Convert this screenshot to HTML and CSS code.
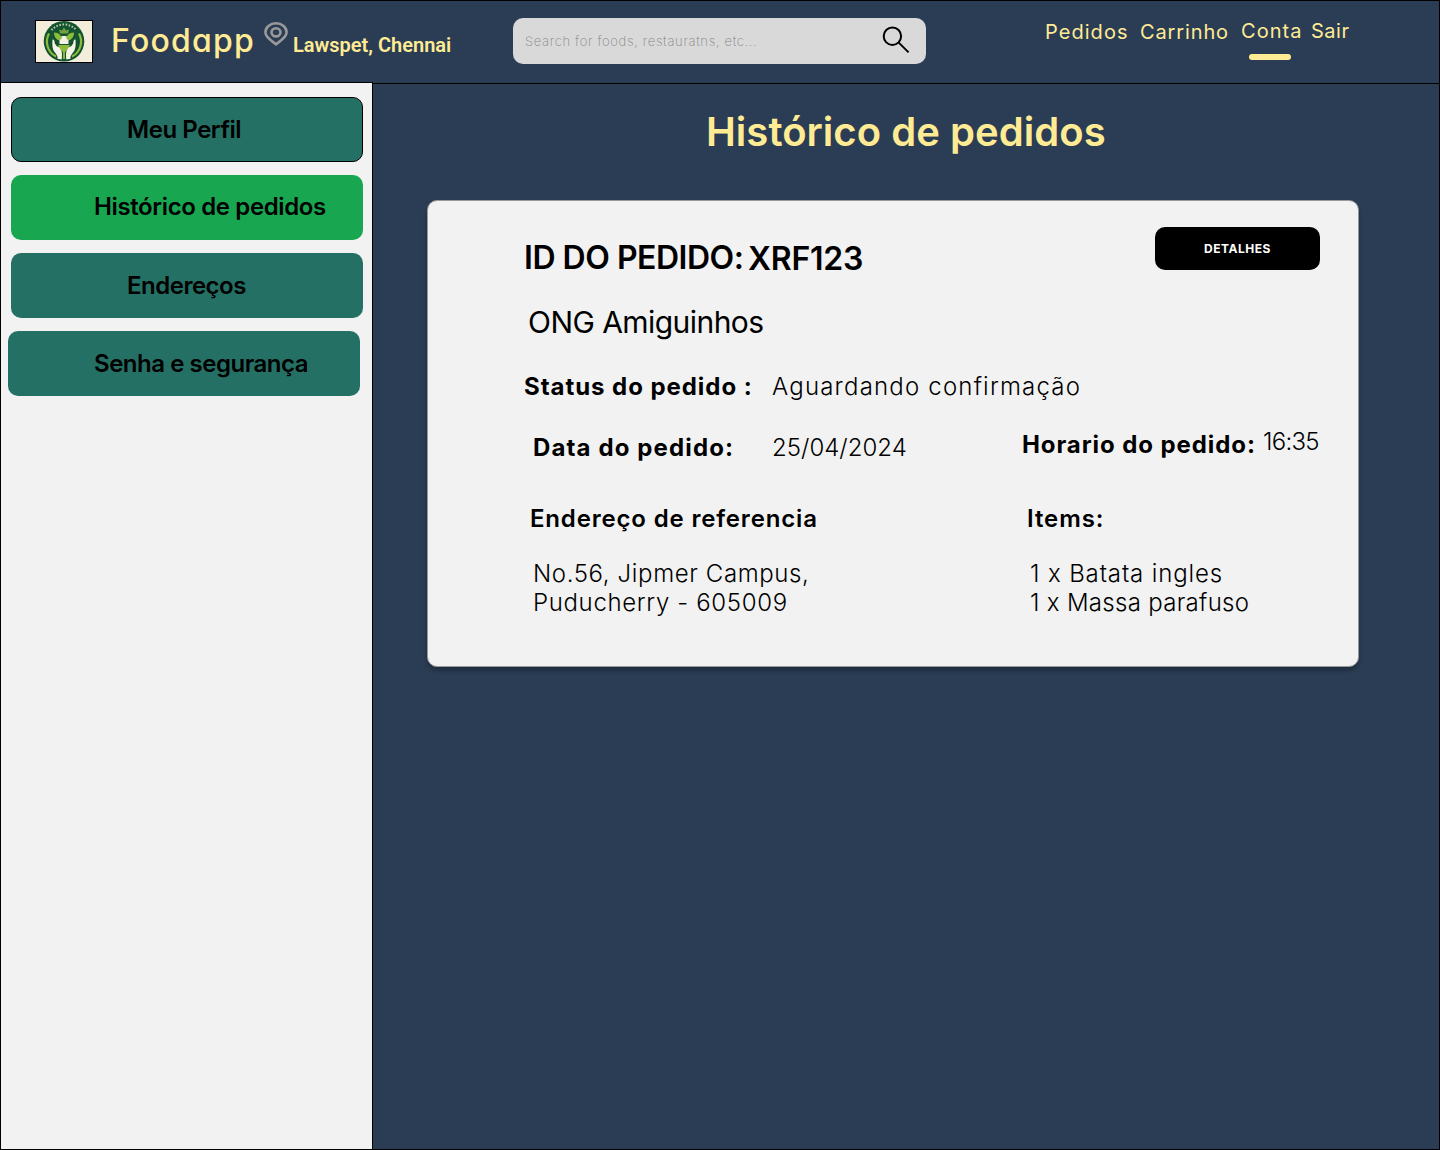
FILE: index.html
```html
<!DOCTYPE html>
<html lang="pt-BR">
<head>
<meta charset="utf-8">
<title>Foodapp - Histórico de pedidos</title>
<link rel="stylesheet" href="styles.css">
</head>
<body>
<div class="page">
  <header class="topbar">
    <svg class="logo" viewBox="0 0 58 43" role="img" aria-label="Foodapp">
      <rect width="58" height="43" fill="#000"/>
      <rect x="1" y="1" width="56" height="41" fill="#f3eedb"/>
      <circle cx="29" cy="21.3" r="20.3" fill="#14532f"/>
      <path d="M14 13.500A16.800 16.800 0 0 0 21 36.500M44 13.500A16.800 16.800 0 0 1 37 36.500" fill="none" stroke="#8dbb3d" stroke-width="2.200"/>
      <path d="M16.500 10A17 17 0 0 1 41.500 10" fill="none" stroke="#b9c9a5" stroke-width="2" stroke-dasharray="1.600 1.500"/>
      <path d="M29 7.500l2 3 3-1-1 4h-8l-1-4 3 1z" fill="#6fa23c"/>
      <path d="M19 12.500c5 0 8 3 8.500 8.500-5 0-8.500-3-8.500-8.500zM39 12.500c-5 0-8 3-8.500 8.500 5 0 8.500-3 8.500-8.500z" fill="#8dbb3d"/>
      <path d="M23 25h12l-2 4-3 3v7h-2v-7l-3-3z" fill="#8dbb3d"/>
      <path d="M26.500 16h5v2.500l2 2V24h-9v-3.500l2-2z" fill="#f3f1e4"/>
      <path d="M17.500 19.500c1.500-.5 2 1 2.300 4l2.200 3c2-.5 3.500 2 4.500 4.500.7 2 .5 5 .3 8.500l-4.300-.7c.3-3-1-4.300-2.500-6.300-2.200-2.300-3-6-2.500-13zM40.500 19.500c-1.500-.5-2 1-2.300 4l-2.200 3c-2-.5-3.500 2-4.500 4.500-.7 2-.5 5-.3 8.500l4.300-.7c-.3-3 1-4.300 2.500-6.300 2.200-2.300 3-6 2.500-13z" fill="#f7f4e6"/>
    </svg>
    <span class="brand">Foodapp</span>
    <svg class="pin" viewBox="0 0 24 24" fill="none" stroke="#999" stroke-width="2.600">
      <path d="M12 22.300C9.500 20.100 1.400 15.700 1.400 10.300C1.400 5.200 6 1.300 12 1.300S22.600 5.200 22.600 10.300C22.600 15.700 14.500 20.100 12 22.300Z"/>
      <ellipse cx="12" cy="10.300" rx="4.500" ry="4.100"/>
    </svg>
    <span class="location">Lawspet, Chennai</span>
    <div class="search">
      <span class="search-text">Search for foods, restauratns, etc...</span>
      <svg class="search-icon" viewBox="0 0 28 28" fill="none" stroke="#000" stroke-width="2">
        <circle cx="10.400" cy="10.200" r="8.700"/>
        <path d="M16.500 16.400L26.600 26.400"/>
      </svg>
    </div>
    <nav class="nav">
      <a class="nav-item">Pedidos</a>
      <a class="nav-item">Carrinho</a>
      <a class="nav-item current">Conta</a>
      <a class="nav-item last">Sair</a>
    </nav>
  </header>
  <div class="body">
    <aside class="sidebar">
      <a class="side-item profile">Meu Perfil</a>
      <a class="side-item history">Histórico de pedidos</a>
      <a class="side-item address">Endereços</a>
      <a class="side-item security">Senha e segurança</a>
    </aside>
    <main class="content">
      <h1 class="title">Histórico de pedidos</h1>
      <section class="card">
        <div class="row row-id">
          <span class="order-label">ID DO PEDIDO:</span>
          <span class="order-id">XRF123</span>
          <a class="details">DETALHES</a>
        </div>
        <div class="row row-org">ONG Amiguinhos</div>
        <div class="row row-status">
          <span class="label status-label">Status do pedido :</span>
          <span class="value status-value">Aguardando confirmação</span>
        </div>
        <div class="row row-date">
          <span class="label date-label">Data do pedido:</span>
          <span class="value date-value">25/04/2024</span>
          <span class="label time-label">Horario do pedido:</span>
          <span class="value time-value">16:35</span>
        </div>
        <div class="row row-heads">
          <span class="head">Endereço de referencia</span>
          <span class="head items-head">Items:</span>
        </div>
        <div class="row row-lists">
          <div class="value">
            <div class="line-campus">No.56, Jipmer Campus,</div>
            <div class="line-city">Puducherry - 605009</div>
          </div>
          <div class="value">
            <div class="line-potato">1 x Batata ingles</div>
            <div class="line-pasta">1 x Massa parafuso</div>
          </div>
        </div>
      </section>
    </main>
  </div>
</div>
</body>
</html>
```
FILE: styles.css
```css
* { box-sizing: border-box; }
body {
  margin: 0;
  font-family: Inter, "Liberation Sans", sans-serif;
  color: #000;
}
.page {
  display: flex;
  flex-direction: column;
  width: 1440px;
  height: 1150px;
  border: 1px solid #000;
  background: #2b3d55;
}

/* Top bar */
.topbar {
  display: grid;
  grid-template-columns: 76px 153px 29px 220px 532px auto;
  align-items: start;
  height: 83px;
  padding-left: 34px;
  border-bottom: 1px solid #000;
  color: #ffeb94;
}
.logo { width: 58px; height: 43px; margin-top: 19px; }
.brand {
  margin-top: 20px;
  font-size: 32px;
  line-height: 39px;
  font-weight: 500;
  letter-spacing: 1.2px;
  font-feature-settings: "cv11";
}
.pin { width: 24px; height: 24px; margin-top: 21px; }
.location {
  margin-top: 33px;
  font: 600 20px/23px Roboto, sans-serif;
}
.search {
  display: flex;
  justify-content: space-between;
  width: 413px;
  height: 46px;
  margin-top: 17px;
  padding: 0 16px 0 12px;
  border-radius: 10px;
  background: #d9d9d9;
}
.search-text {
  margin-top: 15px;
  font-size: 13px;
  line-height: 16px;
  font-weight: 200;
  letter-spacing: .68px;
  color: #858585;
}
.search-icon { width: 28px; height: 28px; margin-top: 8px; }
.nav {
  display: grid;
  grid-template-columns: 95px 101px 70px auto;
  align-items: start;
  justify-content: start;
  padding-top: 18px;
  font-size: 20px;
  line-height: 24px;
  font-weight: 400;
}
.nav-item { margin-top: 1px; letter-spacing: 1.05px; }
.nav-item:nth-child(2) { letter-spacing: .87px; }
.nav-item.current { margin-top: 0; letter-spacing: 1.05px; }
.nav-item.last { margin-top: 0; letter-spacing: .5px; }
.current::after {
  content: "";
  display: block;
  width: 42px;
  height: 6px;
  margin: 11px 0 0 8px;
  border-radius: 3px;
  background: #ffeb94;
}

/* Sidebar */
.body { display: flex; flex: 1; }
.sidebar {
  display: flex;
  flex-direction: column;
  gap: 13px;
  width: 372px;
  margin-top: -2px;
  padding: 14px 9px 0 10px;
  border-top: 1px solid #000;
  border-right: 1px solid #000;
  background: #f2f2f2;
}
.side-item {
  width: 352px;
  height: 65px;
  padding-top: 18px;
  border-radius: 10px;
  background: #257065;
  font-size: 24px;
  line-height: 29px;
  font-weight: 600;
}
.profile { padding: 17px 0 0 115px; border: 1px solid #000; letter-spacing: -.45px; }
.history { padding: 17px 0 0 83px; background: #18a750; letter-spacing: -.37px; }
.address { padding-left: 116px; letter-spacing: -.5px; }
.security { margin-left: -3px; padding-left: 86px; letter-spacing: -.47px; }

/* Order history */
.content { flex: 1; }
.title {
  margin: 24px 0 0 333px;
  font-size: 40px;
  line-height: 48px;
  font-weight: 600;
  letter-spacing: .04px;
  color: #ffeb94;
}
.card {
  width: 932px;
  height: 467px;
  margin: 44px 0 0 54px;
  padding-top: 26px;
  border: 1px solid #999;
  border-radius: 10px;
  background: #f2f2f2;
  box-shadow: 0 4px 4px rgba(0, 0, 0, .25);
}
.row { display: grid; align-items: start; line-height: 29px; font-size: 24px; }
.row-id {
  grid-template-columns: 224px 407px 165px;
  height: 77px;
  padding-left: 96px;
  font-size: 32px;
  line-height: 39px;
  font-weight: 600;
}
.order-label { margin-top: 11px; letter-spacing: -.48px; }
.order-id { margin-top: 12px; letter-spacing: -.24px; }
.details {
  height: 43px;
  border-radius: 10px;
  background: #000;
  color: #fff;
  font-size: 12px;
  line-height: 43px;
  font-weight: 700;
  letter-spacing: .5px;
  text-align: center;
}
.row-org {
  height: 68px;
  padding-left: 100px;
  font-size: 30px;
  line-height: 36px;
  letter-spacing: -.55px;
}
.label { font-weight: 700; }
.value { font-weight: 300; }
.head { font-weight: 600; letter-spacing: .83px; }
.row-status { grid-template-columns: 248px auto; height: 55px; padding-left: 96px; }
.status-label { letter-spacing: .95px; }
.status-value { letter-spacing: 1.19px; }
.row-date { grid-template-columns: 239px 250px 241px auto; height: 77px; padding-left: 105px; }
.date-label { margin-top: 6px; letter-spacing: 1.13px; }
.date-value { margin-top: 6px; letter-spacing: .02px; }
.time-label { margin-top: 3px; letter-spacing: .92px; }
.time-value { letter-spacing: -.75px; }
.row-heads { grid-template-columns: 497px auto; height: 55px; padding-left: 102px; }
.items-head { letter-spacing: .9px; }
.row-lists { grid-template-columns: 497px auto; padding-left: 105px; }
.line-campus { letter-spacing: .62px; }
.line-city { letter-spacing: .65px; }
.line-potato { letter-spacing: .87px; }
.line-pasta { letter-spacing: .3px; }
```
